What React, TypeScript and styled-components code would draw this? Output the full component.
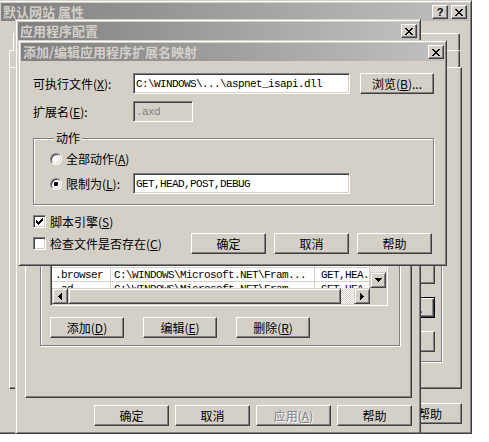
import React from "react";
import styled, { createGlobalStyle, css } from "styled-components";

const FACE = "#d4d0c8";
const SHADOW = "#808080";
const DARK = "#404040";
const HILITE = "#ffffff";

const GlobalStyle = createGlobalStyle`
  * { box-sizing: border-box; }
  html, body { margin: 0; padding: 0; background: #ffffff; }
  body {
    font-family: "Noto Sans CJK SC", "Liberation Sans", sans-serif;
    font-size: 12px;
    line-height: 14px;
    color: #000;
  }
`;

// classic 3d edges
const raised = css`
  background: ${FACE};
  border: 1px solid;
  border-color: ${FACE} ${DARK} ${DARK} ${FACE};
  box-shadow: inset 1px 1px ${HILITE}, inset -1px -1px ${SHADOW};
`;
const sunken = css`
  border: 1px solid;
  border-color: ${SHADOW} ${HILITE} ${HILITE} ${SHADOW};
  box-shadow: inset 1px 1px ${DARK}, inset -1px -1px ${FACE};
`;
const checker = css`
  background: repeating-conic-gradient(#ffffff 0 25%, ${FACE} 0 50%) 0 0 / 2px 2px;
`;

const Desktop = styled.div`
  position: relative;
  width: 489px;
  height: 442px;
  overflow: hidden;
  background: #ffffff;
`;

// windows sit on the desktop at their own coordinates
const Window = styled.div<{ $x: number; $y: number; $w: number; $h: number }>`
  position: absolute;
  left: ${p => p.$x}px;
  top: ${p => p.$y}px;
  width: ${p => p.$w}px;
  height: ${p => p.$h}px;
  display: flex;
  flex-direction: column;
  padding: 2px;
  ${raised};
`;

const TitleBar = styled.div<{ $pr?: number }>`
  flex: none;
  height: 18px;
  display: flex;
  align-items: center;
  padding: 0 ${p => p.$pr ?? 2}px 0 2px;
  background: linear-gradient(to right, #808080, #c0c0c0);
  color: #d4d0c8;
`;

const TitleText = styled.span`
  flex: 1;
  min-width: 0;
  font-size: 13px;
  font-weight: 700;
  line-height: 18px;
  white-space: nowrap;
  overflow: hidden;
`;

const CaptionButton = styled.span<{ $ml?: number }>`
  flex: none;
  width: 16px;
  height: 14px;
  margin-left: ${p => p.$ml ?? 0}px;
  display: flex;
  align-items: center;
  justify-content: center;
  font: bold 11px/1 "Liberation Sans", sans-serif;
  color: #000;
  background: ${FACE};
  border: 1px solid;
  border-color: ${HILITE} ${DARK} ${DARK} ${HILITE};
  box-shadow: inset -1px -1px ${SHADOW};
`;

const PushButton = styled.div<{ $w?: number; $ml?: number; $default?: boolean; $disabled?: boolean }>`
  flex: none;
  width: ${p => p.$w ?? 75}px;
  height: 21px;
  margin-left: ${p => p.$ml ?? 0}px;
  display: flex;
  align-items: center;
  justify-content: center;
  white-space: nowrap;
  background: ${FACE};
  border: 1px solid;
  border-color: ${HILITE} ${DARK} ${DARK} ${HILITE};
  box-shadow: inset -1px -1px ${SHADOW};
  color: ${p => (p.$disabled ? SHADOW : "#000")};
  text-shadow: ${p => (p.$disabled ? `1px 1px 0 ${HILITE}` : "none")};
  ${p =>
    p.$default &&
    css`
      border-color: #000;
      box-shadow: inset 1px 1px ${HILITE}, inset -1px -1px ${DARK}, inset -2px -2px ${SHADOW};
    `}
`;

const TextBox = styled.div<{ $w: number; $disabled?: boolean }>`
  flex: none;
  width: ${p => p.$w}px;
  height: 21px;
  display: flex;
  align-items: center;
  padding: 0 2px;
  overflow: hidden;
  white-space: nowrap;
  background: ${p => (p.$disabled ? FACE : "#ffffff")};
  color: ${p => (p.$disabled ? SHADOW : "#000")};
  font-family: "Liberation Mono", monospace;
  font-size: 11px;
  letter-spacing: -0.6px;
  ${sunken};
`;

const GroupBox = styled.div<{ $mt?: number; $pad: string; $h?: number }>`
  display: flex;
  flex-direction: column;
  margin-top: ${p => p.$mt ?? 0}px;
  height: ${p => (p.$h ? `${p.$h}px` : "auto")};
  padding: ${p => p.$pad};
  border: 1px solid ${SHADOW};
  box-shadow: inset 1px 1px ${HILITE}, 1px 1px 0 ${HILITE};
`;

const Legend = styled.span`
  align-self: flex-start;
  margin: -8px 0 0 4px;
  padding: 0 2px;
  line-height: 14px;
  background: ${FACE};
  white-space: nowrap;
`;

const Row = styled.div<{ $h?: number; $mt?: number; $gap?: number }>`
  display: flex;
  align-items: center;
  flex: none;
  height: ${p => p.$h ?? 21}px;
  margin-top: ${p => p.$mt ?? 0}px;
  gap: ${p => p.$gap ?? 0}px;
  white-space: nowrap;
`;

const FieldLabel = styled.span<{ $w?: number }>`
  flex: none;
  width: ${p => (p.$w ? `${p.$w}px` : "auto")};
  white-space: nowrap;
`;

const Spacer = styled.div<{ $w?: number }>`
  flex: ${p => (p.$w ? `0 0 ${p.$w}px` : "1")};
`;

const RadioCircle = styled.span<{ $checked?: boolean }>`
  flex: none;
  width: 12px;
  height: 12px;
  margin-right: 4px;
  border-radius: 50%;
  background: #ffffff;
  display: flex;
  align-items: center;
  justify-content: center;
  ${sunken};
  &::after {
    content: "";
    display: ${p => (p.$checked ? "block" : "none")};
    width: 4px;
    height: 4px;
    border-radius: 1px;
    background: #000;
  }
`;

const CheckSquare = styled.span`
  flex: none;
  width: 13px;
  height: 13px;
  margin-right: 4px;
  background: #ffffff;
  display: flex;
  align-items: center;
  justify-content: center;
  ${sunken};
`;

const CloseGlyph = () => (
  <svg width="8" height="7" viewBox="0 0 8 7" shapeRendering="crispEdges">
    <path
      d="M0 0h2v1H0zM6 0h2v1H6zM1 1h2v1H1zM5 1h2v1H5zM2 2h4v1H2zM3 3h2v1H3zM2 4h4v1H2zM1 5h2v1H1zM5 5h2v1H5zM0 6h2v1H0zM6 6h2v1H6z"
      fill="#000"
    />
  </svg>
);

const CheckGlyph = () => (
  <svg width="7" height="7" viewBox="0 0 7 7" shapeRendering="crispEdges">
    <path
      d="M6 0h1v1H6zM5 1h2v1H5zM0 2h1v1H0zM4 2h3v1H4zM0 3h2v1H0zM3 3h3v1H3zM0 4h5v1H0zM1 5h3v1H1zM2 6h1v1H2z"
      fill="#000"
    />
  </svg>
);

const arrowPaths = {
  left: "M3 0h1v7H3zM2 1h1v5H2zM1 2h1v3H1zM0 3h1v1H0z",
  right: "M0 0h1v7H0zM1 1h1v5H1zM2 2h1v3H2zM3 3h1v1H3z",
  down: "M0 0h7v1H0zM1 1h5v1H1zM2 2h3v1H2zM3 3h1v1H3z",
  up: "M3 0h1v1H3zM2 1h3v1H2zM1 2h5v1H1zM0 3h7v1H0z"
};

const Arrow = ({ dir }: { dir: keyof typeof arrowPaths }) => {
  const horiz = dir === "left" || dir === "right";
  const w = horiz ? 4 : 7;
  const h = horiz ? 7 : 4;
  return (
    <svg width={w} height={h} viewBox={`0 0 ${w} ${h}`} shapeRendering="crispEdges">
      <path d={arrowPaths[dir]} fill="#000" />
    </svg>
  );
};

const Check = ({ checked, children }: { checked?: boolean; children: React.ReactNode }) => (
  <>
    <CheckSquare>{checked && <CheckGlyph />}</CheckSquare>
    <FieldLabel>{children}</FieldLabel>
  </>
);

/* ---------- window 1: property sheet ---------- */

const SheetBody = styled.div`
  flex: 1;
  min-height: 0;
  display: flex;
  flex-direction: column;
  padding: 12px 7px 7px 8px;
`;

const TabRow = styled.div<{ $indent?: number }>`
  flex: none;
  height: 17px;
  display: flex;
  padding: 0 2px 0 ${p => p.$indent ?? 0}px;
`;

// labels sit at the left of each stretched tab
const Tab = styled.div`
  flex: 1 1 auto;
  display: flex;
  align-items: center;
  padding-left: 6px;
  white-space: nowrap;
  overflow: hidden;
  background: ${FACE};
  border-top: 1px solid ${HILITE};
  border-left: 1px solid ${HILITE};
  border-right: 1px solid ${DARK};
  border-radius: 2px 2px 0 0;
  box-shadow: inset -1px 0 ${SHADOW};
`;

const SheetPanel = styled.div<{ $pad: string }>`
  flex: 1;
  min-height: 0;
  display: flex;
  flex-direction: column;
  padding: ${p => p.$pad};
  border: 1px solid;
  border-color: ${HILITE} ${DARK} ${DARK} ${HILITE};
  box-shadow: inset -1px -1px ${SHADOW};
`;

const ButtonBar = styled.div<{ $mt: number; $gap: number }>`
  flex: none;
  display: flex;
  justify-content: flex-end;
  gap: ${p => p.$gap}px;
  margin-top: ${p => p.$mt}px;
`;

const SideButtons = styled.div`
  flex: 1;
  display: flex;
  flex-direction: column;
  align-items: flex-end;
  justify-content: flex-end;
  gap: 13px;
  padding: 0 6px 9px 0;
`;

/* ---------- window 2: application configuration ---------- */

const ConfigBody = styled.div`
  flex: 1;
  min-height: 0;
  display: flex;
  flex-direction: column;
  padding: 6px 6px 5px 7px;
`;

const SmallTabs = styled.div`
  flex: none;
  height: 18px;
  display: flex;
  padding-left: 2px;
`;

const SmallTab = styled(Tab)`
  flex: none;
  padding: 0 7px;
`;

const ListView = styled.div`
  flex: none;
  height: 197px;
  margin-top: 8px;
  display: grid;
  grid-template-columns: 1fr 16px;
  grid-template-rows: 1fr 16px;
  padding: 1px;
  background: #ffffff;
  ${sunken};
`;

const ListClient = styled.div`
  overflow: hidden;
  display: flex;
  flex-direction: column;
  font-family: "Liberation Mono", monospace;
  font-size: 11px;
  letter-spacing: -0.6px;
`;

const ListLine = styled.div<{ $header?: boolean }>`
  flex: none;
  display: grid;
  grid-template-columns: 59px 204px 1fr;
  height: ${p => (p.$header ? 17 : 14)}px;
  ${p =>
    p.$header
      ? css`
          font-family: "Noto Sans CJK SC", sans-serif;
          font-size: 12px;
          letter-spacing: 0;
        `
      : css`
          border-bottom: 1px solid ${FACE};
        `}
`;

const ListCell = styled.span<{ $pl?: number; $header?: boolean }>`
  display: flex;
  align-items: center;
  padding-left: ${p => p.$pl ?? 3}px;
  white-space: nowrap;
  overflow: hidden;
  border-right: 1px solid ${FACE};
  ${p => p.$header && raised};
`;

const ScrollButton = styled.div`
  flex: none;
  width: 16px;
  height: 16px;
  display: flex;
  align-items: center;
  justify-content: center;
  ${raised};
`;

const VScroll = styled.div`
  display: flex;
  flex-direction: column;
  ${checker};
`;

const VTrack = styled.div`
  flex: 1;
  display: flex;
  flex-direction: column;
`;

const VThumb = styled.div`
  flex: none;
  height: 34px;
  margin-top: 58px;
  ${raised};
`;

const HScroll = styled.div`
  display: flex;
  ${checker};
`;

const HThumb = styled.div`
  flex: none;
  ${raised};
`;

const Corner = styled.div`
  background: ${FACE};
`;

/* ---------- window 3: add / edit mapping ---------- */

const DialogBody = styled.div`
  flex: 1;
  min-height: 0;
  display: flex;
  flex-direction: column;
  padding: 12px 10px 0 12px;
`;

type Mapping = { ext: string; path: string; verbs: string };

const NET = "C:\\WINDOWS\\Microsoft.NET\\Fram...";
const INETSRV = "C:\\WINDOWS\\system32\\inetsrv\\a...";

const mappings: Mapping[] = [
  { ext: ".asa", path: INETSRV, verbs: "GET,HEA..." },
  { ext: ".asp", path: INETSRV, verbs: "GET,HEA..." },
  { ext: ".cdx", path: INETSRV, verbs: "GET,HEA..." },
  { ext: ".cer", path: INETSRV, verbs: "GET,HEA..." },
  { ext: ".idc", path: "C:\\WINDOWS\\system32\\inetsrv\\h...", verbs: "GET,POST" },
  { ext: ".shtm", path: "C:\\WINDOWS\\system32\\inetsrv\\s...", verbs: "GET,POST" },
  { ext: ".shtml", path: "C:\\WINDOWS\\system32\\inetsrv\\s...", verbs: "GET,POST" },
  { ext: ".stm", path: "C:\\WINDOWS\\system32\\inetsrv\\s...", verbs: "GET,POST" },
  { ext: ".asax", path: NET, verbs: "GET,HEA..." },
  { ext: ".ascx", path: NET, verbs: "GET,HEA..." },
  { ext: ".browser", path: NET, verbs: "GET,HEA..." },
  { ext: ".ad", path: NET, verbs: "GET,HEA..." }
];

const App: React.FC = () => {
  return (
    <>
      <GlobalStyle />
      <Desktop>
        {/* 默认网站 属性 */}
        <Window $x={-2} $y={0} $w={474} $h={434}>
          <TitleBar>
            <TitleText>默认网站 属性</TitleText>
            <CaptionButton>?</CaptionButton>
            <CaptionButton $ml={3}>
              <CloseGlyph />
            </CaptionButton>
          </TitleBar>
          <SheetBody>
            <TabRow $indent={4}>
              <Tab>网站</Tab>
              <Tab>性能</Tab>
              <Tab>ISAPI 筛选器</Tab>
              <Tab>主目录</Tab>
              <Tab>文档</Tab>
            </TabRow>
            <TabRow>
              <Tab>目录安全性</Tab>
              <Tab>HTTP 头</Tab>
              <Tab>自定义错误</Tab>
              <Tab>ASP.NET</Tab>
            </TabRow>
            <SheetPanel $pad="0 19px 26px 10px">
              <Spacer />
              <GroupBox $pad="0" $h={196}>
                <Legend>应用程序设置</Legend>
                <SideButtons>
                  <PushButton>删除(E)</PushButton>
                  <PushButton $default>配置(G)...</PushButton>
                  <PushButton>卸载(L)</PushButton>
                </SideButtons>
              </GroupBox>
            </SheetPanel>
            <ButtonBar $mt={14} $gap={6}>
              <PushButton $w={64}>确定</PushButton>
              <PushButton $w={64}>取消</PushButton>
              <PushButton $w={64} $disabled>
                应用(A)
              </PushButton>
              <PushButton $w={64}>帮助</PushButton>
            </ButtonBar>
          </SheetBody>
        </Window>

        {/* 应用程序配置 */}
        <Window $x={15} $y={19} $w={406} $h={415}>
          <TitleBar $pr={1}>
            <TitleText>应用程序配置</TitleText>
            <CaptionButton>
              <CloseGlyph />
            </CaptionButton>
          </TitleBar>
          <ConfigBody>
            <SmallTabs>
              <SmallTab>映射</SmallTab>
              <SmallTab>选项</SmallTab>
              <SmallTab>调试</SmallTab>
            </SmallTabs>
            <SheetPanel $pad="10px 11px 0 14px">
              <Row $h={13}>
                <Check checked>
                  缓存 ISAPI 扩展(<u>W</u>)
                </Check>
              </Row>
              <GroupBox $mt={6} $pad="0 11px 7px 9px">
                <Legend>应用程序扩展</Legend>
                <ListView>
                  <ListClient>
                    <ListLine $header>
                      <ListCell $header>扩展名</ListCell>
                      <ListCell $header>可执行文件路径</ListCell>
                      <ListCell $header>限制为</ListCell>
                    </ListLine>
                    {mappings.map(m => (
                      <ListLine key={m.ext}>
                        <ListCell>{m.ext}</ListCell>
                        <ListCell>{m.path}</ListCell>
                        <ListCell $pl={6}>{m.verbs}</ListCell>
                      </ListLine>
                    ))}
                  </ListClient>
                  <VScroll>
                    <ScrollButton>
                      <Arrow dir="up" />
                    </ScrollButton>
                    <VTrack>
                      <VThumb />
                    </VTrack>
                    <ScrollButton>
                      <Arrow dir="down" />
                    </ScrollButton>
                  </VScroll>
                  <HScroll>
                    <ScrollButton>
                      <Arrow dir="left" />
                    </ScrollButton>
                    <HThumb style={{ width: 273 }} />
                    <Spacer />
                    <ScrollButton>
                      <Arrow dir="right" />
                    </ScrollButton>
                  </HScroll>
                  <Corner />
                </ListView>
                <Row $mt={11} $gap={19}>
                  <PushButton $w={74}>
                    添加(<u>D</u>)
                  </PushButton>
                  <PushButton $w={74}>
                    编辑(<u>E</u>)
                  </PushButton>
                  <PushButton $w={74}>
                    删除(<u>R</u>)
                  </PushButton>
                </Row>
              </GroupBox>
            </SheetPanel>
            <ButtonBar $mt={7} $gap={6}>
              <PushButton>确定</PushButton>
              <PushButton>取消</PushButton>
              <PushButton $disabled>
                应用(<u>A</u>)
              </PushButton>
              <PushButton>帮助</PushButton>
            </ButtonBar>
          </ConfigBody>
        </Window>

        {/* 添加/编辑应用程序扩展名映射 */}
        <Window $x={18} $y={40} $w={429} $h={226}>
          <TitleBar $pr={0}>
            <TitleText>添加/编辑应用程序扩展名映射</TitleText>
            <CaptionButton>
              <CloseGlyph />
            </CaptionButton>
          </TitleBar>
          <DialogBody>
            <Row>
              <FieldLabel $w={100}>
                可执行文件(<u>X</u>):
              </FieldLabel>
              <TextBox $w={217}>{"C:\\WINDOWS\\...\\aspnet_isapi.dll"}</TextBox>
              <PushButton $w={74} $ml={10}>
                浏览(<u>B</u>)...
              </PushButton>
            </Row>
            <Row $mt={7}>
              <FieldLabel $w={100}>
                扩展名(<u>E</u>):
              </FieldLabel>
              <TextBox $w={60} $disabled>
                .axd
              </TextBox>
            </Row>
            <GroupBox $mt={16} $pad="0 0 10px 16px">
              <Legend>动作</Legend>
              <Row $h={16} $mt={6}>
                <RadioCircle />
                <FieldLabel>
                  全部动作(<u>A</u>)
                </FieldLabel>
              </Row>
              <Row $mt={6}>
                <RadioCircle $checked />
                <FieldLabel $w={67}>
                  限制为(<u>L</u>):
                </FieldLabel>
                <TextBox $w={217}>GET,HEAD,POST,DEBUG</TextBox>
              </Row>
            </GroupBox>
            <Row $mt={6}>
              <Check checked>
                脚本引擎(<u>S</u>)
              </Check>
            </Row>
            <Row $mt={1}>
              <Check>
                检查文件是否存在(<u>C</u>)
              </Check>
              <Spacer />
              <PushButton>确定</PushButton>
              <PushButton $ml={8}>取消</PushButton>
              <PushButton $ml={8}>帮助</PushButton>
              <Spacer $w={2} />
            </Row>
          </DialogBody>
        </Window>
      </Desktop>
    </>
  );
};

export default App;
